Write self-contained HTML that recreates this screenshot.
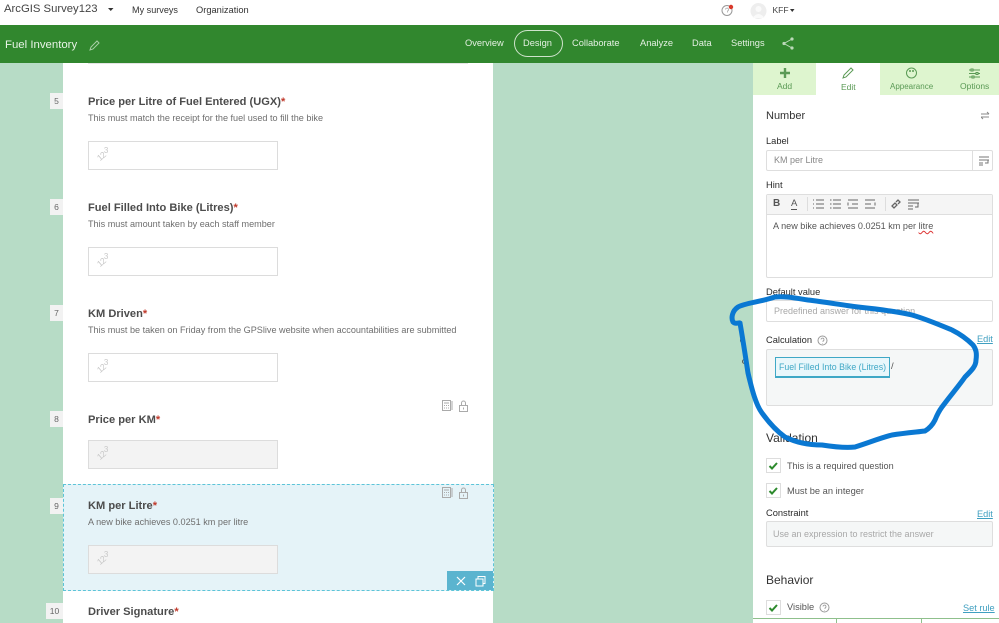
<!DOCTYPE html>
<html><head><meta charset="utf-8"><style>
html,body{margin:0;padding:0}
body{width:999px;height:623px;overflow:hidden;position:relative;background:#fff;font-family:"Liberation Sans",sans-serif;color:#4a4a4a}
.a{position:absolute;white-space:nowrap}
.n{position:absolute;background:#f2f2f2;color:#666;font-size:8.5px;text-align:center;line-height:16px;height:16px}
.q{position:absolute;left:88px;font-size:11.1px;font-weight:bold;color:#4c4c4c;white-space:nowrap}
.q i{color:#c0392b;font-style:normal}
.h{position:absolute;left:88px;font-size:9.1px;color:#6e6e6e;white-space:nowrap}
.i{position:absolute;left:88px;width:187.500px;height:26.500px;border:1.500px solid #dcdcdc;background:#fff}
.i.g{background:#f3f3f3}
.i span{position:absolute;left:8px;top:8px;font-size:8.500px;line-height:10px;letter-spacing:-.6px;color:#c8c8c8;transform:rotate(-40deg)}
.i span b{position:relative;top:-2px;left:1px;font-weight:normal;font-size:8px;display:inline-block;transform:rotate(40deg)}
.l{position:absolute;left:766px;font-size:9.300px;color:#2b2b2b;white-space:nowrap}
.b{position:absolute;box-sizing:border-box;border:1px solid #dedede;border-radius:2px;background:#fff;font-size:9px;color:#a8a8a8;white-space:nowrap}
.c{position:absolute;left:766px;width:15px;height:15px;box-sizing:border-box;border:1px solid #ddd;background:#fff}
.lnk{position:absolute;font-size:9.200px;color:#3f9fc0;text-decoration:underline;white-space:nowrap}
.t{position:absolute;font-size:8.500px;color:#5a9a55;text-align:center;white-space:nowrap}
.nv{position:absolute;top:38px;font-size:9.300px;color:#e4f0e2;white-space:nowrap}
</style></head><body>
<div class="a" style="left:4px;top:3px;font-size:11.300px;color:#444">ArcGIS Survey123</div>
<svg class="a" style="left:108px;top:8px" width="6" height="4"><path d="M0 0h5.500L2.750 3z" fill="#333"/></svg>
<div class="a" style="left:132px;top:5px;font-size:9.100px;color:#333">My surveys</div>
<div class="a" style="left:196px;top:5px;font-size:9.300px;color:#333">Organization</div>
<svg class="a" style="left:720px;top:3px" width="16" height="14"><circle cx="7" cy="7.500" r="5" fill="#fff" stroke="#999"/><path d="M5.500 6.500a1.500 1.500 0 112 1.500v1.500" fill="none" stroke="#aaa" stroke-width=".8"/><circle cx="11" cy="4" r="2.200" fill="#d9392b"/></svg>
<svg class="a" style="left:750px;top:2px" width="18" height="18"><circle cx="8.500" cy="9" r="8" fill="#eee"/><circle cx="8.500" cy="7" r="3" fill="#fafafa"/><path d="M2.500 16q6-8 12 0z" fill="#fafafa"/></svg>
<div class="a" style="left:772.500px;top:5px;font-size:8.500px;color:#444">KFF</div>
<svg class="a" style="left:790px;top:9px" width="5" height="4"><path d="M0 0h4.500L2.250 3z" fill="#333"/></svg>

<div class="a" style="left:0;top:25px;width:999px;height:38px;background:#31872e"></div>
<div class="a" style="left:5px;top:38.500px;font-size:11.400px;color:#e8f3e6">Fuel Inventory</div>
<svg class="a" style="left:89px;top:39px" width="12" height="12"><path d="M1 11l1-3 6-6 2 2-6 6z" fill="none" stroke="#a9cfa6"/></svg>
<div class="nv" style="left:465px">Overview</div>
<div class="a" style="left:514px;top:30px;width:47px;height:25px;border:1px solid #cfe3cc;border-radius:14px"></div>
<div class="nv" style="left:523px">Design</div>
<div class="nv" style="left:572px">Collaborate</div>
<div class="nv" style="left:640px">Analyze</div>
<div class="nv" style="left:692px">Data</div>
<div class="nv" style="left:731px">Settings</div>
<svg class="a" style="left:782px;top:37px" width="13" height="13"><path d="M10 2L2 6.500 10 11" fill="none" stroke="#bcd9b9"/><circle cx="10" cy="2" r="1.600" fill="#bcd9b9"/><circle cx="2" cy="6.500" r="1.600" fill="#bcd9b9"/><circle cx="10" cy="11" r="1.600" fill="#bcd9b9"/></svg>

<div class="a" style="left:0;top:63px;width:753px;height:560px;background:#b7dcc6"></div>
<div class="a" style="left:63px;top:63px;width:430px;height:560px;background:#fff"></div>
<div class="a" style="left:88px;top:63px;width:380px;height:1px;background:#e4e4e4"></div>

<div class="n" style="left:50px;top:93px;width:13px">5</div>
<div class="q" style="top:96px">Price per Litre of Fuel Entered (UGX)<i>*</i></div>
<div class="h" style="top:113px">This must match the receipt for the fuel used to fill the bike</div>
<div class="i" style="top:141px"><span>12<b>3</b></span></div>

<div class="n" style="left:50px;top:199px;width:13px">6</div>
<div class="q" style="top:202px">Fuel Filled Into Bike (Litres)<i>*</i></div>
<div class="h" style="top:219px">This must amount taken by each staff member</div>
<div class="i" style="top:247px"><span>12<b>3</b></span></div>

<div class="n" style="left:50px;top:305px;width:13px">7</div>
<div class="q" style="top:308px">KM Driven<i>*</i></div>
<div class="h" style="top:325px">This must be taken on Friday from the GPSlive website when accountabilities are submitted</div>
<div class="i" style="top:353px"><span>12<b>3</b></span></div>

<div class="n" style="left:50px;top:411px;width:13px">8</div>
<div class="q" style="top:414px">Price per KM<i>*</i></div>
<div class="i g" style="top:440px"><span>12<b>3</b></span></div>

<div class="a" style="left:63px;top:484px;width:429px;height:105px;background:#e5f3f8;border:1px dashed #5cc4d8"></div>
<div class="n" style="left:50px;top:498px;width:13px">9</div>
<div class="q" style="top:500px">KM per Litre<i>*</i></div>
<div class="h" style="top:517px">A new bike achieves 0.0251 km per litre</div>
<div class="i g" style="top:545px"><span>12<b>3</b></span></div>
<div class="a" style="left:447px;top:571px;width:46px;height:19px;background:#5bb4cf"></div>
<svg class="a" style="left:447px;top:571px" width="46" height="19"><path d="M10 6l8 8M18 6l-8 8" stroke="#fff" stroke-width="1.200"/><path d="M29 8h7v7h-7zM31 8V5.500h7v7h-2" fill="none" stroke="#fff"/></svg>

<svg class="a" style="left:441px;top:399px" width="30" height="13"><g fill="none" stroke="#aaa"><rect x="1.500" y="1.500" width="8" height="10"/><path d="M3 4h5M3 6.500h1M5 6.500h1M7 6.500h1M3 9h1M5 9h1M7 9h1M11 2v9"/><rect x="18.500" y="6.500" width="8" height="6"/><path d="M20.500 6V4a2 2 0 014 0v2"/><path d="M22.500 8.500v2"/></g></svg>
<svg class="a" style="left:441px;top:486px" width="30" height="13"><g fill="none" stroke="#aaa"><rect x="1.500" y="1.500" width="8" height="10"/><path d="M3 4h5M3 6.500h1M5 6.500h1M7 6.500h1M3 9h1M5 9h1M7 9h1M11 2v9"/><rect x="18.500" y="6.500" width="8" height="6"/><path d="M20.500 6V4a2 2 0 014 0v2"/><path d="M22.500 8.500v2"/></g></svg>

<div class="n" style="left:46px;top:603px;width:17px">10</div>
<div class="q" style="top:606px">Driver Signature<i>*</i></div>

<div class="a" style="left:753px;top:63px;width:246px;height:560px;background:#fff"></div>
<div class="a" style="left:753px;top:63px;width:63px;height:32px;background:#def5cf"></div>
<div class="a" style="left:880px;top:63px;width:119px;height:32px;background:#def5cf"></div>
<svg class="a" style="left:779px;top:67px" width="12" height="12"><path d="M6 1v10M1 6h10" stroke="#5a9a55" stroke-width="2.400"/></svg>
<svg class="a" style="left:842px;top:67px" width="12" height="12"><path d="M1 11l1-3 7-7 2 2-7 7z" fill="none" stroke="#5a9a55"/></svg>
<svg class="a" style="left:905px;top:67px" width="13" height="12"><circle cx="6.500" cy="6" r="5" fill="none" stroke="#5a9a55"/><circle cx="5" cy="4" r="1" fill="#5a9a55"/><circle cx="8" cy="4" r="1" fill="#5a9a55"/></svg>
<svg class="a" style="left:968px;top:68px" width="13" height="11"><path d="M1 2h11M1 5.500h11M1 9h11" stroke="#5a9a55"/><rect x="3" y="1" width="2" height="2" fill="#def5cf" stroke="#5a9a55"/><rect x="8" y="4.500" width="2" height="2" fill="#def5cf" stroke="#5a9a55"/><rect x="4" y="8" width="2" height="2" fill="#def5cf" stroke="#5a9a55"/></svg>
<div class="t" style="left:777px;top:81px">Add</div>
<div class="t" style="left:841px;top:82px">Edit</div>
<div class="t" style="left:890px;top:82px;font-size:8px">Appearance</div>
<div class="t" style="left:960px;top:81px">Options</div>

<div class="a" style="left:766px;top:110px;font-size:11px;color:#333">Number</div>
<svg class="a" style="left:981px;top:111px" width="9" height="9"><path d="M0 3h8M6 1l2 2M8 6H0M2 8L0 6" fill="none" stroke="#888"/></svg>
<div class="l" style="top:136px">Label</div>
<div class="b" style="left:766px;top:150px;width:227px;height:21px;padding:4px 7px;font-size:9px;color:#888">KM per Litre</div>
<div class="a" style="left:972px;top:150px;width:1px;height:21px;background:#dedede"></div>
<svg class="a" style="left:978px;top:156px" width="12" height="10"><path d="M1 1h10M1 4h10M1 7h4M1 9h4M10 4v3H7" fill="none" stroke="#777"/></svg>
<div class="l" style="top:180px">Hint</div>
<div class="b" style="left:766px;top:194px;width:227px;height:84px"></div>
<div class="a" style="left:767px;top:195px;width:225px;height:19px;background:#f5f5f5;border-bottom:1px solid #dedede"></div>
<div class="a" style="left:773px;top:198px;font-size:10px;font-weight:bold;color:#555">B</div>
<div class="a" style="left:791px;top:198px;font-size:9.500px;color:#555;border-bottom:1px solid #555;line-height:11px">A</div>
<svg class="a" style="left:807px;top:196px" width="112" height="16"><g stroke="#666" fill="none"><path d="M.5 1v14M78.500 1v14" stroke="#ddd"/><path d="M9 4h8M9 8h8M9 12h8M6 4h1M6 8h1M6 12h1M26 4h8M26 8h8M26 12h8M23 4h1.500M23 8h1.500M23 12h1.500M41 4h10M45 8h6M41 12h10M41 6.500v3M58 4h10M58 8h6M58 12h10M68 6.500v3"/><path d="M85 10l3-3 2 2-3 3-2-2zM89 6l2-2 2 2-2 2" stroke-width="1.300"/><path d="M101 4h11M101 7h11M101 10h5M101 13h5M111 7v4h-3"/></g></svg>
<div class="a" style="left:773px;top:221px;font-size:9.100px;color:#555">A new bike achieves 0.0251 km per <span style="text-decoration:underline wavy #d33;text-decoration-thickness:1px">litre</span></div>
<div class="l" style="top:287px">Default value</div>
<div class="b" style="left:766px;top:300px;width:227px;height:22px;padding:5px 7px">Predefined answer for this question</div>
<div class="l" style="top:335px">Calculation</div>
<svg class="a" style="left:817px;top:335px" width="11" height="11"><circle cx="5.500" cy="5.500" r="4.500" fill="none" stroke="#999"/><path d="M4 4.500a1.500 1.500 0 112 1.500v1M5.500 8.500v.5" fill="none" stroke="#999" stroke-width=".8"/></svg>
<div class="lnk" style="left:977px;top:334px">Edit</div>
<div class="b" style="left:766px;top:349px;width:227px;height:57px;background:#f5f7f7"></div>
<div class="a" style="left:775px;top:357px;box-sizing:border-box;width:115px;height:21px;background:#e9f7fb;border:1px solid #3fa8c6;border-bottom-width:2px;font-size:8.800px;line-height:18px;text-align:center;color:#3fa8c6">Fuel Filled Into Bike (Litres)</div>
<div class="a" style="left:891px;top:361px;font-size:9.500px;color:#555">/</div>
<div class="a" style="left:766px;top:431px;font-size:12px;color:#333">Validation</div>
<div class="c" style="top:458px"></div><div class="c" style="top:483px"></div><div class="c" style="top:600px"></div>
<svg class="a" style="left:766px;top:458px" width="15" height="15"><path d="M3.500 8l2.500 2.500 5-5.500" fill="none" stroke="#2d8a2d" stroke-width="2"/></svg>
<svg class="a" style="left:766px;top:483px" width="15" height="15"><path d="M3.500 8l2.500 2.500 5-5.500" fill="none" stroke="#2d8a2d" stroke-width="2"/></svg>
<svg class="a" style="left:766px;top:600px" width="15" height="15"><path d="M3.500 8l2.500 2.500 5-5.500" fill="none" stroke="#2d8a2d" stroke-width="2"/></svg>
<div class="a" style="left:787px;top:461px;font-size:9.100px;color:#555">This is a required question</div>
<div class="a" style="left:787px;top:486px;font-size:9.300px;color:#555">Must be an integer</div>
<div class="l" style="top:508px">Constraint</div>
<div class="lnk" style="left:977px;top:509px">Edit</div>
<div class="b" style="left:766px;top:521px;width:227px;height:26px;background:#f5f7f7;padding:7px 6px">Use an expression to restrict the answer</div>
<div class="a" style="left:766px;top:573px;font-size:12px;color:#333">Behavior</div>
<div class="a" style="left:787px;top:602px;font-size:9.300px;color:#555">Visible</div>
<svg class="a" style="left:819px;top:602px" width="11" height="11"><circle cx="5.500" cy="5.500" r="4.500" fill="none" stroke="#999"/><path d="M4 4.500a1.500 1.500 0 112 1.500v1M5.500 8.500v.5" fill="none" stroke="#999" stroke-width=".8"/></svg>
<div class="lnk" style="left:963px;top:603px">Set rule</div>
<div class="a" style="left:753px;top:618px;width:246px;height:1px;background:#8fc08c"></div>
<div class="a" style="left:836px;top:618px;width:1px;height:5px;background:#8fc08c"></div>
<div class="a" style="left:921px;top:618px;width:1px;height:5px;background:#8fc08c"></div>
<div class="a" style="left:740px;top:338px;width:5px;height:5px;border-radius:50%;background:#444"></div>
<div class="a" style="left:742px;top:359px;width:3px;height:3px;border-radius:50%;border:1px solid #555"></div>

<svg class="a" style="left:0;top:0" width="999" height="623"><path d="M808 300C795 298 785 296 775 297C760 302 745 303 738 307C732 311 731 318 733 322C736 325 739 322 740 323C743 340 746 360 748 373C752 390 756 405 762 413C770 424 778 432 785 437C797 443 810 445 822 445C835 447 847 448 855 447C868 443 880 438 892 435C905 433 917 432 925 431C930 428 933 424 935 420C937 415 939 411 942 407C950 396 958 387 965 377C972 370 976 366 976 360C977 353 976 349 973 345C967 339 960 334 952 330C940 325 926 319 912 315C895 311 877 309 858 307C842 305 825 302 808 300Z" fill="none" stroke="#0a78d2" stroke-width="5" stroke-linecap="round"/></svg>
</body></html>
